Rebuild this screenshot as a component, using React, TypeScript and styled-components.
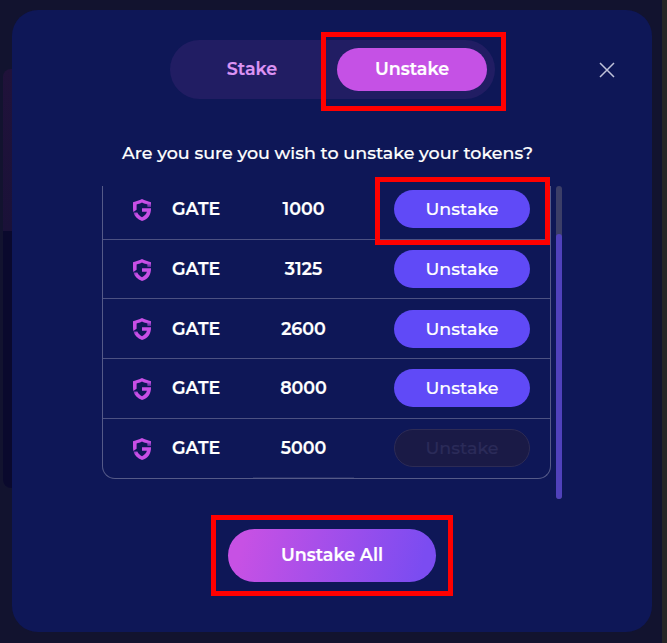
import React from "react";
import styled, { createGlobalStyle, css } from "styled-components";

const GlobalStyle = createGlobalStyle`
  * { box-sizing: border-box; }
  html, body { margin: 0; padding: 0; }
  body { overflow: hidden; background: #12132f; }
  button { font: inherit; color: inherit; border: 0; padding: 0; }
`;

const Page = styled.main`
  position: relative;
  width: 667px;
  height: 643px;
  padding: 10px 0 0 12px;
  overflow: hidden;
  background: #12132f;
  border-right: 5px solid #262626;
  font-family: "Montserrat", "Inter", sans-serif;
  font-size: 17.5px;
  color: #fff;
  -webkit-text-stroke-width: 0.2px;
`;

const BackgroundCard = styled.div`
  position: absolute;
  left: 3px;
  top: 69px;
  width: 40px;
  height: 419px;
  border-radius: 8px;
  background: linear-gradient(#20123a 0, #1a1138 162px, #0a092d 162px);
`;

const Modal = styled.section`
  position: relative;
  width: 640px;
  height: 622px;
  border-radius: 26px;
  background: #0e1757;
  display: flex;
  flex-direction: column;
`;

const Header = styled.header`
  display: flex;
  align-items: center;
  height: 59px;
  margin-top: 30px;
  padding-left: 158px;
`;

const Tabs = styled.nav`
  display: flex;
  align-items: center;
  width: 325px;
  height: 59px;
  padding: 0 8px;
  border-radius: 30px;
  background: #211d63;
`;

const Highlight = styled.span<{ $top: number; $right: number; $bottom: number; $left: number }>`
  position: absolute;
  top: -${(p) => p.$top}px;
  right: -${(p) => p.$right}px;
  bottom: -${(p) => p.$bottom}px;
  left: -${(p) => p.$left}px;
  border: 5px solid #ff0000;
  pointer-events: none;
  z-index: 2;
`;

const Tab = styled.button<{ $active?: boolean }>`
  position: relative;
  width: ${(p) => (p.$active ? 150 : 148)}px;
  height: 43px;
  margin-left: ${(p) => (p.$active ? 11 : 0)}px;
  padding-bottom: 2px;
  border-radius: 22px;
  background: ${(p) => (p.$active ? "#c551e5" : "transparent")};
  color: ${(p) => (p.$active ? "#fff" : "#dc94f3")};
  font-weight: 600;
`;

const CloseButton = styled.button`
  width: 16px;
  height: 16px;
  margin-left: 104px;
  background: none;
  svg { display: block; }
`;

const Question = styled.h1`
  margin: 43px 0 0;
  width: 631px;
  height: 22px;
  line-height: 22px;
  font-size: 17.5px;
  font-weight: 500;
  text-align: center;
`;

const ListArea = styled.div`
  display: flex;
  justify-content: space-between;
  width: 460px;
  height: 313px;
  margin: 22px 0 0 90px;
`;

const Rows = styled.div`
  width: 449px;
  height: 293px;
  display: grid;
  grid-template-rows: 54px 59px 60px 60px 59px;
  border-radius: 0 0 13px 13px;
  border: solid #555a88;
  border-width: 0 1px 1px;
`;

const Token = styled.div`
  padding-left: 20px;
  font-weight: 600;
`;

const Amount = styled.div`
  width: 124px;
  padding-left: 5px;
  text-align: center;
  font-weight: 600;
`;

const RowButton = styled.button<{ $disabled?: boolean }>`
  position: relative;
  width: 136px;
  height: 38px;
  margin-left: 77px;
  border-radius: 19px;
  background: #604af7;
  font-size: 17.5px;
  font-weight: 500;
  ${(p) =>
    p.$disabled &&
    css`
      background: #1a1a46;
      border: 1px solid #2d2b55;
      color: #2b2b59;
    `}
`;

const Row = styled.div<{ $raised: boolean }>`
  display: grid;
  grid-template-columns: 20px 87px 78px 136px;
  align-items: center;
  padding-left: 29px;
  border-bottom: 1px solid #4c5182;
  ${Token}, ${Amount}, ${RowButton} {
    margin-bottom: ${(p) => (p.$raised ? 2 : 0)}px;
  }
  > svg { margin-top: ${(p) => (p.$raised ? 0 : 1)}px; }
  &:first-child { padding-bottom: 6px; }
  &:nth-child(2) {
    ${Token}, ${Amount} { margin-bottom: 2px; }
    ${RowButton} { padding-bottom: 2px; }
  }
  &:last-child {
    border-bottom: 0;
    background: linear-gradient(#242c66, #242c66) 150px 100% / 101px 1px no-repeat;
  }
`;

const ScrollTrack = styled.div`
  width: 6px;
  height: 313px;
  padding-top: 48px;
  border-radius: 3px;
  background: #3b3e67;
`;

const ScrollThumb = styled.div`
  height: 265px;
  border-radius: 3px;
  background: #5041bb;
`;

const UnstakeAll = styled.button`
  position: relative;
  width: 208px;
  height: 53px;
  margin: 30px 0 0 216px;
  padding-bottom: 2px;
  border-radius: 27px;
  background: linear-gradient(105deg, #c751e4 8%, #7b4cf1 92%);
  font-weight: 600;
`;

const GateIcon = () => (
  <svg width="20" height="22" viewBox="0 0 20 22" fill="none">
    <defs>
      <linearGradient id="fadeRight" x1="16" y1="4" x2="16" y2="8.5" gradientUnits="userSpaceOnUse">
        <stop stopColor="#c84fe6" />
        <stop offset="1" stopColor="#4a2891" />
      </linearGradient>
      <linearGradient id="fadeLeft" x1="1" y1="12" x2="6" y2="16" gradientUnits="userSpaceOnUse">
        <stop stopColor="#542b9c" />
        <stop offset=".8" stopColor="#c84fe6" />
      </linearGradient>
    </defs>
    <path d="M1 3.2C4.5 2.4 7 1.5 10 0v3.6C8 4.6 6.5 5.1 4.6 5.5v5.2L1.4 13C1.1 11.8 1 10.5 1 9z" fill="#c84fe6" />
    <path d="M10 0c3 1.5 5.5 2.4 9 3.200V8h-3.600V5.500C13.500 5.100 12 4.600 10 3.600z" fill="url(#fadeRight)" />
    <path d="M1.500 13.600h3.800c.9 2 2.300 3.400 4.700 4.600V22c-4.600-1.700-7.500-4.500-8.500-8.400z" fill="url(#fadeLeft)" />
    <path d="M10 9.200h9c0 6.800-2.800 10.800-9 12.800v-3.800c2.800-1.400 4.200-3 4.900-5.400H10z" fill="#c84fe6" />
  </svg>
);

const entries = [
  { amount: "1000", raised: true },
  { amount: "3125", raised: false },
  { amount: "2600", raised: false },
  { amount: "8000", raised: true },
  { amount: "5000", raised: true },
];

export default function App() {
  return (
    <>
      <GlobalStyle />
      <Page>
        <BackgroundCard />
        <Modal>
          <Header>
            <Tabs>
              <Tab>Stake</Tab>
              <Tab $active>
                Unstake
                <Highlight $top={16} $right={19} $bottom={20} $left={16} />
              </Tab>
            </Tabs>
            <CloseButton aria-label="Close">
              <svg width="16" height="16" viewBox="0 0 16 16" stroke="#bfc2d9" strokeWidth="1.5">
                <path d="m1 1 14 14M15 1 1 15" />
              </svg>
            </CloseButton>
          </Header>
          <Question>Are you sure you wish to unstake your tokens?</Question>
          <ListArea>
            <Rows>
              {entries.map(({ amount, raised }, i) => (
                <Row key={amount} $raised={raised}>
                  <GateIcon />
                  <Token>GATE</Token>
                  <Amount>{amount}</Amount>
                  <RowButton $disabled={i === 4}>
                    Unstake
                    {i === 0 && <Highlight $top={13} $right={20} $bottom={17} $left={19} />}
                  </RowButton>
                </Row>
              ))}
            </Rows>
            <ScrollTrack><ScrollThumb /></ScrollTrack>
          </ListArea>
          <UnstakeAll>
            Unstake All
            <Highlight $top={14} $right={17} $bottom={14} $left={17} />
          </UnstakeAll>
        </Modal>
      </Page>
    </>
  );
}
